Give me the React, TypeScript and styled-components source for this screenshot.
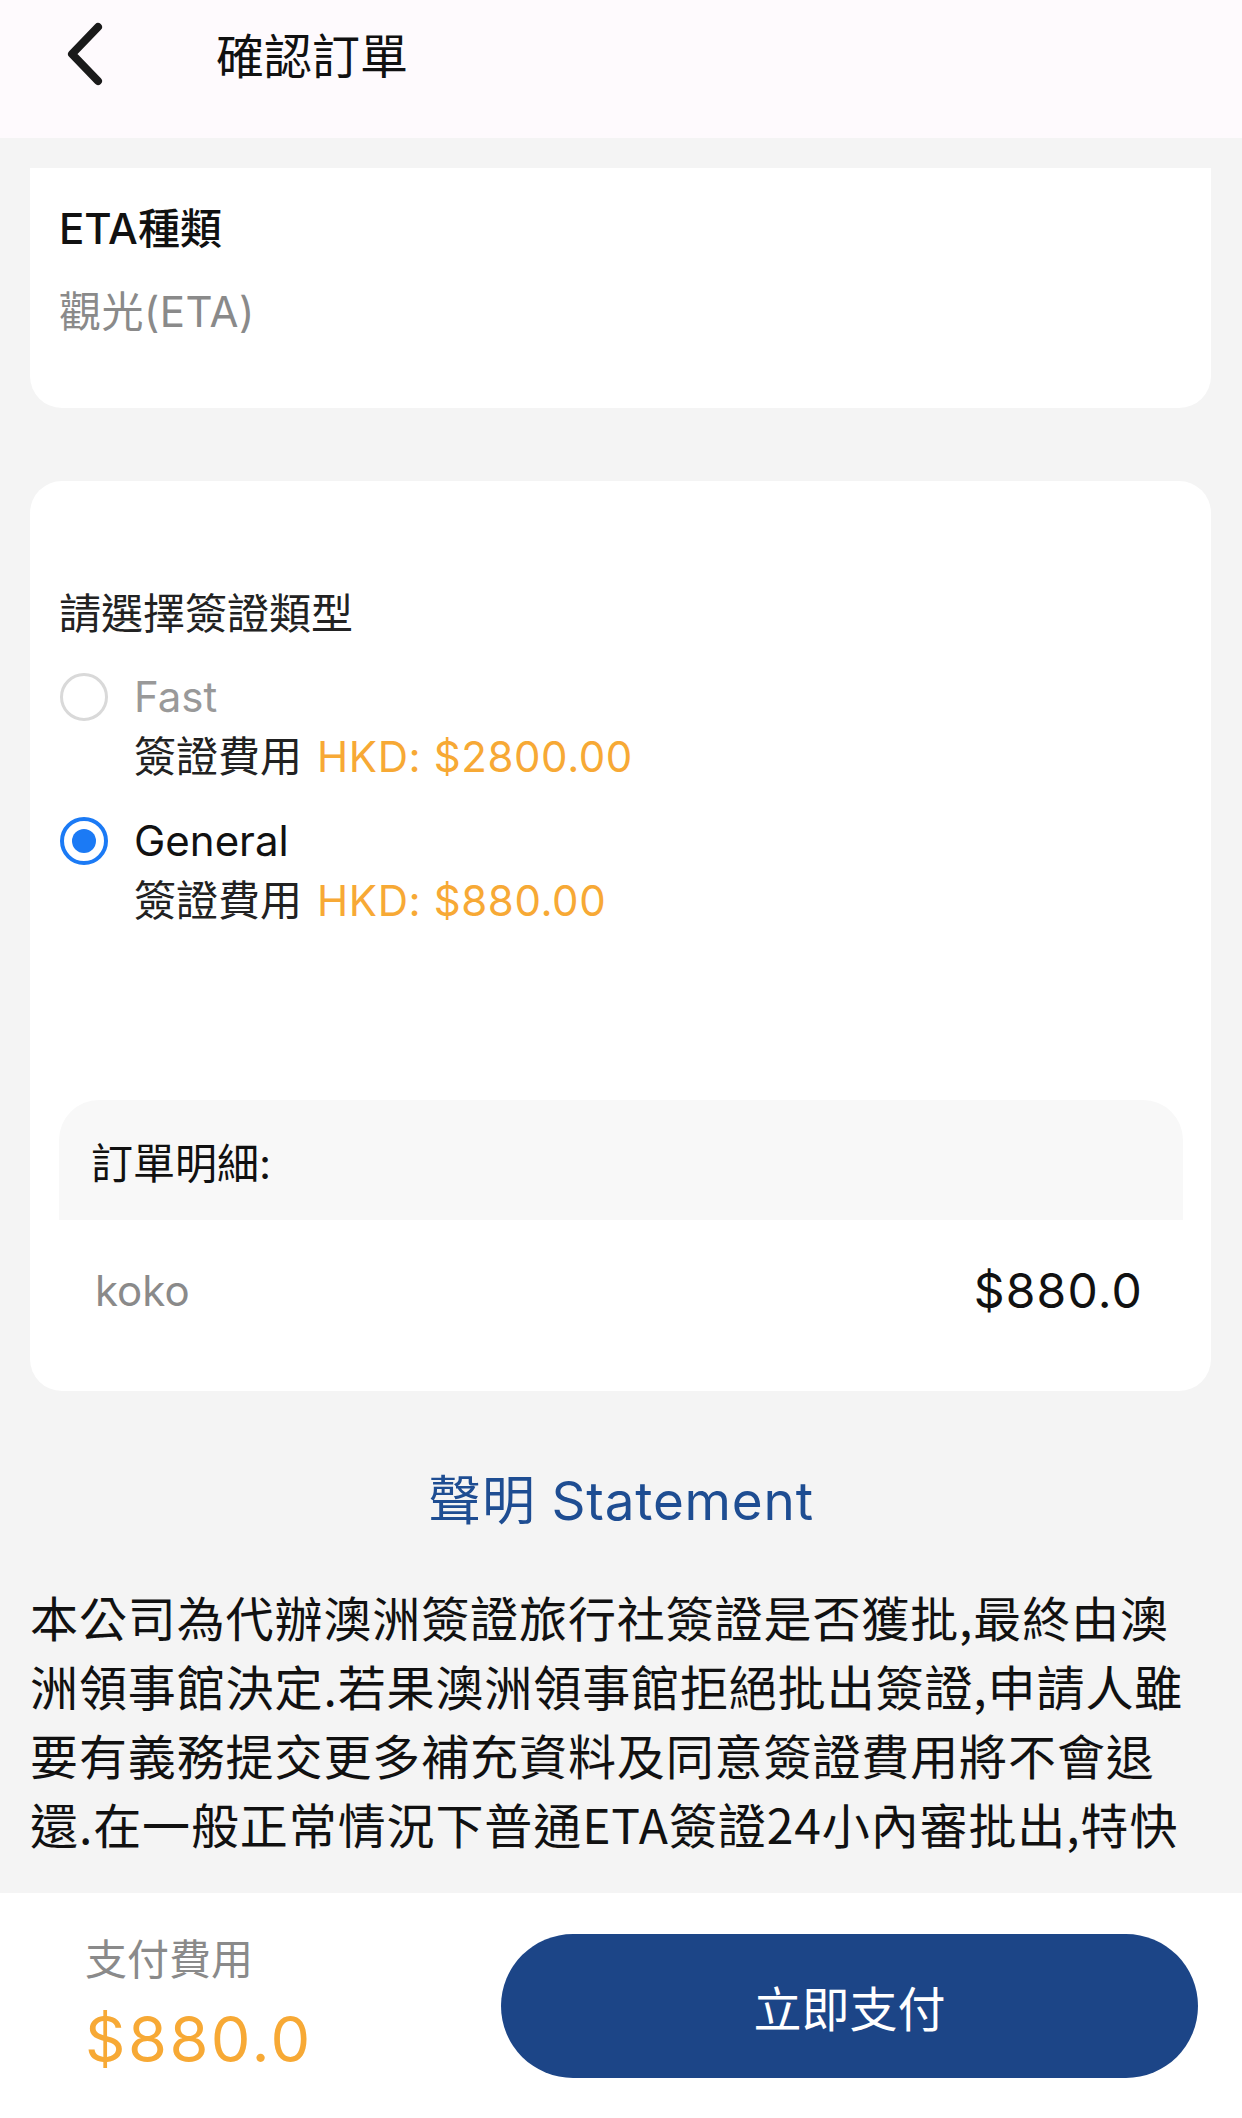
import React, { useState } from "react";
import styled, { createGlobalStyle } from "styled-components";

const GlobalStyle = createGlobalStyle`
  html, body { margin: 0; padding: 0; }
  body {
    font-family: "Inter", "Noto Sans CJK TC", sans-serif;
    color: #111;
    -webkit-font-smoothing: antialiased;
  }
  * { box-sizing: border-box; }
`;

const Screen = styled.div`
  height: 100vh;
  display: flex;
  flex-direction: column;
  background: #f4f4f4;
  overflow: hidden;
`;

const Header = styled.header`
  flex: 0 0 138px;
  background: #fefafd;
  display: flex;
  align-items: flex-start;
`;

const HeaderRow = styled.div`
  height: 108px;
  display: flex;
  align-items: center;
  padding-left: 62px;
  gap: 108px;
`;

const BackButton = styled.button`
  border: 0;
  background: transparent;
  padding: 0;
  width: 46px;
  height: 64px;
  display: flex;
  align-items: center;
  justify-content: center;
  cursor: pointer;
`;

const Title = styled.h1`
  margin: 0;
  font-size: 48px;
  font-weight: 400;
  color: #111;
  line-height: 1.2;
  font-family: "Noto Sans CJK TC", sans-serif;
`;

const Scroll = styled.main`
  flex: 1 1 auto;
  overflow: hidden;
  padding-top: 30px;
`;

const Card = styled.section<{ $squareTop?: boolean }>`
  margin: 0 31px 0 30px;
  background: #fff;
  border-radius: ${(p) => (p.$squareTop ? "0 0 32px 32px" : "32px")};
  padding: ${(p) => (p.$squareTop ? "36px 29px 71px" : "108px 28px 31px 29px")};
`;

const FieldLabel = styled.div`
  font-size: 42px;
  font-weight: 500;
  line-height: 50px;
  color: #111;
`;

const FieldValue = styled.div`
  margin-top: 33px;
  font-size: 42px;
  line-height: 50px;
  color: #8a8a8a;
  letter-spacing: 0.5px;
`;

const Gap = styled.div<{ $h: number }>`
  height: ${(p) => p.$h}px;
`;

const SectionTitle = styled.div`
  font-size: 42px;
  line-height: 50px;
  color: #222;
`;

const Options = styled.div`
  margin-top: 28px;
  display: flex;
  flex-direction: column;
  gap: 29px;
`;

const Option = styled.div`
  display: grid;
  grid-template-columns: 48px 1fr;
  column-gap: 27px;
  row-gap: 5px;
  align-items: center;
  cursor: pointer;
`;

const Radio = styled.span<{ $checked: boolean }>`
  width: 48px;
  height: 48px;
  border-radius: 50%;
  margin-left: 1px;
  border: ${(p) => (p.$checked ? "4px solid #1b7af5" : "3px solid #d9d9d9")};
  display: flex;
  align-items: center;
  justify-content: center;
  &::after {
    content: "";
    width: 24px;
    height: 24px;
    border-radius: 50%;
    background: ${(p) => (p.$checked ? "#1b7af5" : "transparent")};
  }
`;

const OptionName = styled.span<{ $checked: boolean }>`
  font-size: 42px;
  line-height: 60px;
  color: ${(p) => (p.$checked ? "#111" : "#999")};
`;

const Fee = styled.div`
  grid-column: 2;
  font-size: 42px;
  line-height: 50px;
  color: #222;
  white-space: nowrap;
`;

const FeeAmount = styled.span`
  color: #f7a935;
  letter-spacing: 0.6px;
  margin-left: 15px;
`;

const Detail = styled.div`
  margin-top: 174px;
  border-radius: 40px 40px 0 0;
  overflow: hidden;
`;

const DetailHead = styled.div`
  height: 120px;
  background: #f8f8f8;
  display: flex;
  align-items: center;
  padding-left: 32px;
  font-size: 42px;
  color: #111;
`;

const DetailRow = styled.div`
  height: 140px;
  display: flex;
  align-items: center;
  justify-content: space-between;
  padding: 0 40px 0 36px;
`;

const ItemName = styled.span`
  font-size: 42px;
  color: #8a8a8a;
`;

const ItemPrice = styled.span`
  font-size: 48px;
  color: #111;
  letter-spacing: 1.2px;
`;

const Statement = styled.h2`
  margin: 79px 0 0;
  text-align: center;
  font-size: 53px;
  font-weight: 400;
  line-height: 62px;
  color: #1e4d92;
  letter-spacing: 0.8px;
`;

const Paragraph = styled.div`
  margin-top: 50px;
  padding: 0 30px;
  font-family: "Noto Sans CJK TC", sans-serif;
  font-size: 48px;
  line-height: 69px;
  color: #111;
  letter-spacing: 0.9px;
`;

const Line = styled.div`
  white-space: nowrap;
`;

const BottomBar = styled.footer`
  flex: 0 0 225px;
  background: #fff;
  display: flex;
  align-items: center;
  justify-content: space-between;
  padding: 0 44px 0 85px;
`;

const Total = styled.div`
  display: flex;
  flex-direction: column;
  gap: 16px;
`;

const TotalLabel = styled.span`
  font-size: 42px;
  line-height: 50px;
  color: #8a8a8a;
`;

const TotalValue = styled.span`
  font-size: 63px;
  line-height: 76px;
  color: #f7a935;
  letter-spacing: 2.5px;
`;

const PayButton = styled.button`
  width: 697px;
  height: 144px;
  border: 0;
  border-radius: 72px;
  background: #1c4587;
  color: #fff;
  font-family: "Noto Sans CJK TC", sans-serif;
  font-size: 48px;
  cursor: pointer;
`;

const options = [
  { id: "fast", name: "Fast", fee: "HKD: $2800.00" },
  { id: "general", name: "General", fee: "HKD: $880.00" },
];

const statementLines = [
  "本公司為代辦澳洲簽證旅行社簽證是否獲批,最終由澳",
  "洲領事館決定.若果澳洲領事館拒絕批出簽證,申請人雖",
  "要有義務提交更多補充資料及同意簽證費用將不會退",
  "還.在一般正常情況下普通ETA簽證24小內審批出,特快",
];

export default function App() {
  const [selected, setSelected] = useState("general");
  return (
    <>
      <GlobalStyle />
      <Screen>
        <Header>
          <HeaderRow>
            <BackButton aria-label="back">
              <svg width="40" height="64" viewBox="0 0 40 64" fill="none">
                <path
                  d="M33 5 L7 32 L33 59"
                  stroke="#1a1a1a"
                  strokeWidth="8"
                  strokeLinecap="round"
                  strokeLinejoin="round"
                />
              </svg>
            </BackButton>
            <Title>確認訂單</Title>
          </HeaderRow>
        </Header>
        <Scroll>
          <Card $squareTop>
            <FieldLabel>ETA種類</FieldLabel>
            <FieldValue>觀光(ETA)</FieldValue>
          </Card>
          <Gap $h={73} />
          <Card>
            <SectionTitle>請選擇簽證類型</SectionTitle>
            <Options>
              {options.map((o) => (
                <Option key={o.id} onClick={() => setSelected(o.id)}>
                  <Radio $checked={selected === o.id} />
                  <OptionName $checked={selected === o.id}>{o.name}</OptionName>
                  <Fee>
                    簽證費用<FeeAmount>{o.fee}</FeeAmount>
                  </Fee>
                </Option>
              ))}
            </Options>
            <Detail>
              <DetailHead>訂單明細:</DetailHead>
              <DetailRow>
                <ItemName>koko</ItemName>
                <ItemPrice>$880.0</ItemPrice>
              </DetailRow>
            </Detail>
          </Card>
          <Statement>聲明 Statement</Statement>
          <Paragraph>
            {statementLines.map((l) => (
              <Line key={l}>{l}</Line>
            ))}
          </Paragraph>
        </Scroll>
        <BottomBar>
          <Total>
            <TotalLabel>支付費用</TotalLabel>
            <TotalValue>$880.0</TotalValue>
          </Total>
          <PayButton>立即支付</PayButton>
        </BottomBar>
      </Screen>
    </>
  );
}
